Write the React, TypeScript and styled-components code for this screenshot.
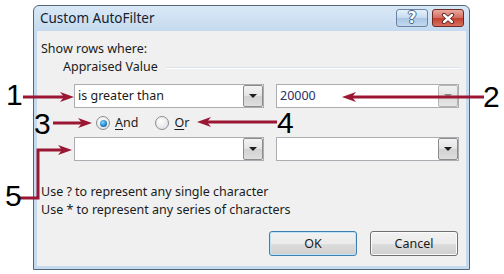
import React from 'react';
import styled, { createGlobalStyle, css } from 'styled-components';

const GlobalStyle = createGlobalStyle`
  html, body {
    margin: 0;
    padding: 0;
    background: #ffffff;
  }
  body {
    font-family: "Noto Sans", "Open Sans", sans-serif;
    color: #1b1b1b;
  }
`;

const Page = styled.div`
  position: relative;
  width: 504px;
  height: 274px;
  box-sizing: border-box;
  padding: 5px 0 0 33px;
  overflow: hidden;
`;

const Dialog = styled.div`
  width: 437px;
  height: 265px;
  box-sizing: border-box;
  border: 1px solid #56657a;
  border-radius: 6px 6px 0 0;
  background: linear-gradient(#d9e8f6, #c4daef 26px, #c4daef);
  display: flex;
  flex-direction: column;
`;

const TitleBar = styled.div`
  height: 25px;
  flex-shrink: 0;
  display: flex;
  align-items: flex-start;
  padding: 0 5px 0 6px;
`;

const Title = styled.div`
  flex: 1;
  font-size: 13.5px;
  line-height: 25px;
  color: #17212d;
`;

const CaptionButton = styled.div<{ $close?: boolean }>`
  width: 32px;
  height: 18px;
  margin-top: 3px;
  margin-left: 4px;
  box-sizing: border-box;
  border-radius: 3px;
  display: flex;
  align-items: center;
  justify-content: center;
  ${(p) =>
    p.$close
      ? css`
          border: 1px solid #6e2a24;
          background: linear-gradient(#e9a99f, #d46b5e 50%, #c2402f 51%, #d8705f);
        `
      : css`
          border: 1px solid #6a84a6;
          background: linear-gradient(#e6f0fa, #c6dbef 50%, #a9c6e4 51%, #c3d9ef);
        `}
`;

const HelpGlyph = styled.span`
  font-family: "DejaVu Sans", sans-serif;
  font-weight: bold;
  font-size: 15px;
  line-height: 1;
  color: #ffffff;
  text-shadow: 1px 0 0 #46617f, -1px 0 0 #46617f, 0 1px 0 #46617f, 0 -1px 0 #46617f;
`;

const Client = styled.div`
  flex: 1;
  margin: 0 3px 3px;
  background: #f0f0f0;
  display: flex;
  flex-direction: column;
  font-size: 12.5px;
`;

const Heading = styled.div`
  line-height: 16px;
  padding: 10px 0 0 4px;
`;

const GroupRow = styled.div`
  display: flex;
  align-items: center;
  margin-top: 2px;
  padding: 0 5px 0 26px;
  line-height: 16px;
`;

const GroupLine = styled.div`
  flex: 1;
  height: 1px;
  margin-left: 8px;
  background: #dbe2e9;
  box-shadow: 0 1px 0 #ffffff;
`;

const FieldRow = styled.div<{ $top: number }>`
  display: flex;
  gap: 12px;
  margin-top: ${(p) => p.$top}px;
  padding-left: 37px;
`;

const Combo = styled.div<{ $width: number }>`
  width: ${(p) => p.$width}px;
  height: 24px;
  box-sizing: border-box;
  border: 1px solid #abadb3;
  background: #ffffff;
  display: flex;
  align-items: stretch;
`;

const ComboText = styled.div<{ $blue?: boolean }>`
  flex: 1;
  padding-left: 3px;
  line-height: 22px;
  color: ${(p) => (p.$blue ? '#2b2f6a' : '#1b1b1b')};
`;

const DropButton = styled.div<{ $disabled?: boolean }>`
  width: 20px;
  box-sizing: border-box;
  border: 1px solid ${(p) => (p.$disabled ? '#b4b4b4' : '#8c8c8c')};
  border-radius: 2px;
  background: ${(p) =>
    p.$disabled
      ? 'linear-gradient(#f1f1f1, #e2e2e2 50%, #d9d9d9 51%, #e6e6e6)'
      : 'linear-gradient(#f3f3f3, #e4e4e4 50%, #d2d2d2 51%, #dedede)'};
  display: flex;
  align-items: center;
  justify-content: center;
`;

const Caret = styled.div<{ $disabled?: boolean }>`
  width: 0;
  height: 0;
  border-left: 4px solid transparent;
  border-right: 4px solid transparent;
  border-top: 4px solid ${(p) => (p.$disabled ? '#8a8a8a' : '#1e1e1e')};
`;

const RadioRow = styled.div`
  display: flex;
  align-items: center;
  gap: 5px;
  height: 24px;
  margin-top: 3px;
  padding-left: 59px;
`;

const RadioCircle = styled.div<{ $checked?: boolean }>`
  width: 14px;
  height: 14px;
  box-sizing: border-box;
  border-radius: 50%;
  border: 1px solid #8a8c8f;
  background: radial-gradient(circle at 40% 35%, #ffffff, #d8d9db);
  display: flex;
  align-items: center;
  justify-content: center;
  &::after {
    content: '';
    display: ${(p) => (p.$checked ? 'block' : 'none')};
    width: 7px;
    height: 7px;
    border-radius: 50%;
    background: radial-gradient(circle at 40% 35%, #8fd6fb, #1a7fc4 60%, #0d4f86);
  }
`;

const RadioLabel = styled.span<{ $gap?: number }>`
  margin-right: ${(p) => p.$gap ?? 0}px;
  line-height: 16px;
  u {
    text-decoration: underline;
    text-underline-offset: 2px;
  }
`;

const Hints = styled.div`
  margin-top: 22px;
  padding-left: 4px;
  line-height: 18px;
`;

const ButtonRow = styled.div`
  display: flex;
  justify-content: flex-end;
  gap: 13px;
  margin-top: 12px;
  padding-right: 8px;
`;

const DialogButton = styled.div<{ $default?: boolean }>`
  width: 88px;
  height: 25px;
  box-sizing: border-box;
  border-radius: 3px;
  border: 1px solid ${(p) => (p.$default ? '#3c7fb1' : '#707070')};
  box-shadow: ${(p) => (p.$default ? 'inset 0 0 0 1px #bfe4f7' : 'inset 0 0 0 1px #fbfbfb')};
  background: linear-gradient(#f2f2f2, #ebebeb 50%, #dddddd 51%, #cfcfcf);
  text-align: center;
  line-height: 23px;
`;

const Callout = styled.span<{ $x: number; $y: number }>`
  position: absolute;
  left: ${(p) => p.$x}px;
  top: ${(p) => p.$y}px;
  font-family: "Liberation Sans", Arial, sans-serif;
  font-size: 30px;
  line-height: 30px;
  color: #000000;
`;

const Overlay = styled.svg`
  position: absolute;
  left: 0;
  top: 0;
  pointer-events: none;
`;

const RED = '#9b1632';

const head = (tx: number, ty: number, dir: 1 | -1) =>
  `${tx},${ty} ${tx - dir * 14},${ty - 5} ${tx - dir * 10},${ty} ${tx - dir * 14},${ty + 5}`;

const Arrows = () => (
  <Overlay width={504} height={274} viewBox="0 0 504 274">
    <g stroke={RED} strokeWidth={3} fill="none">
      <line x1={23} y1={97} x2={64} y2={97} />
      <line x1={484} y1={97} x2={352} y2={97} />
      <line x1={53} y1={123} x2={82} y2={123} />
      <line x1={277} y1={122} x2={207} y2={122} />
      <polyline points="20,198 38,198 38,150 62,150" />
    </g>
    <g fill={RED}>
      <polygon points={head(74, 97, 1)} />
      <polygon points={head(342, 97, -1)} />
      <polygon points={head(92, 123, 1)} />
      <polygon points={head(197, 122, -1)} />
      <polygon points={head(72, 150, 1)} />
    </g>
  </Overlay>
);

const CloseIcon = () => (
  <svg width="14" height="11" viewBox="0 0 14 11">
    <path d="M3 2 L11 9 M11 2 L3 9" stroke="#5a1f19" strokeWidth={4.2} strokeLinecap="round" />
    <path d="M3 2 L11 9 M11 2 L3 9" stroke="#ffffff" strokeWidth={2.4} strokeLinecap="round" />
  </svg>
);

const ComboBox = ({ width, value, blue, disabled }: { width: number; value?: string; blue?: boolean; disabled?: boolean }) => (
  <Combo $width={width}>
    <ComboText $blue={blue}>{value}</ComboText>
    <DropButton $disabled={disabled}>
      <Caret $disabled={disabled} />
    </DropButton>
  </Combo>
);

const App = () => {
  return (
    <>
      <GlobalStyle />
      <Page>
        <Dialog>
          <TitleBar>
            <Title>Custom AutoFilter</Title>
            <CaptionButton>
              <HelpGlyph>?</HelpGlyph>
            </CaptionButton>
            <CaptionButton $close>
              <CloseIcon />
            </CaptionButton>
          </TitleBar>
          <Client>
            <Heading>Show rows where:</Heading>
            <GroupRow>
              Appraised Value
              <GroupLine />
            </GroupRow>
            <FieldRow $top={9}>
              <ComboBox width={190} value="is greater than" />
              <ComboBox width={183} value="20000" blue disabled />
            </FieldRow>
            <RadioRow>
              <RadioCircle $checked />
              <RadioLabel $gap={12}>
                <u>A</u>nd
              </RadioLabel>
              <RadioCircle />
              <RadioLabel>
                <u>O</u>r
              </RadioLabel>
            </RadioRow>
            <FieldRow $top={2}>
              <ComboBox width={190} />
              <ComboBox width={183} />
            </FieldRow>
            <Hints>
              <div>Use ? to represent any single character</div>
              <div>Use * to represent any series of characters</div>
            </Hints>
            <ButtonRow>
              <DialogButton $default>OK</DialogButton>
              <DialogButton>Cancel</DialogButton>
            </ButtonRow>
          </Client>
        </Dialog>
        <Arrows />
        <Callout $x={6} $y={80}>1</Callout>
        <Callout $x={483} $y={82}>2</Callout>
        <Callout $x={34} $y={109}>3</Callout>
        <Callout $x={277} $y={108}>4</Callout>
        <Callout $x={5} $y={181}>5</Callout>
      </Page>
    </>
  );
};

export default App;
